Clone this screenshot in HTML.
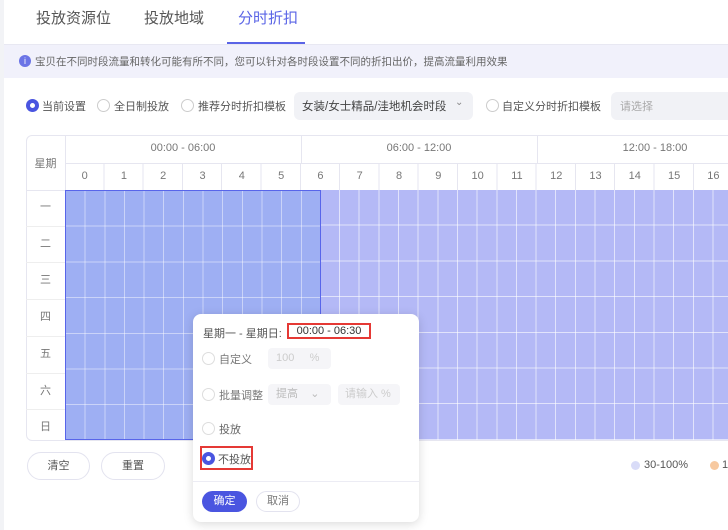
<!DOCTYPE html><html><head><meta charset="utf-8"><style>
*{margin:0;padding:0;box-sizing:border-box}
body{width:728px;height:530px;overflow:hidden;background:#fff;font-family:"Liberation Sans","Noto Sans CJK SC",sans-serif;color:#333;position:relative}
.a{position:absolute;white-space:nowrap}
.strip{left:0;top:0;width:4px;height:530px;background:#f2f3f6}
.tab{top:7px;font-size:15px;color:#555}
.radio{position:absolute;width:13px;height:13px;border:1px solid #ccc;border-radius:50%;background:#fff}
.radio.on{border:4px solid #4a55e0}
.t12{font-size:11px;color:#555}
.hd{font-size:11px;color:#777;text-align:center}
</style></head><body>
<div class="a strip"></div>
<div class="a tab" style="left:36px">投放资源位</div>
<div class="a tab" style="left:144px">投放地域</div>
<div class="a tab" style="left:238px;color:#5a64e6">分时折扣</div>
<div class="a" style="left:4px;top:44px;width:724px;height:1px;background:#e8e8f2"></div>
<div class="a" style="left:227px;top:42px;width:78px;height:2px;background:#5a64e6"></div>
<div class="a" style="left:4px;top:45px;width:724px;height:33px;background:#f1f1fb"></div>
<div class="a" style="left:19px;top:55px;width:12px;height:12px;border-radius:50%;background:#6b74e6;color:#fff;font-size:9px;text-align:center;line-height:12px">i</div>
<div class="a" style="left:35px;top:54px;font-size:10.5px;color:#666">宝贝在不同时段流量和转化可能有所不同，您可以针对各时段设置不同的折扣出价，提高流量利用效果</div>

<div class="radio on" style="left:26px;top:99px"></div><div class="a t12" style="left:42px;top:98px">当前设置</div>
<div class="radio" style="left:97px;top:99px"></div><div class="a t12" style="left:114px;top:98px">全日制投放</div>
<div class="radio" style="left:181px;top:99px"></div><div class="a t12" style="left:198px;top:98px">推荐分时折扣模板</div>
<div class="a" style="left:294px;top:92px;width:179px;height:28px;border-radius:6px;background:#f1f2f6"></div>
<div class="a" style="left:302px;top:98px;font-size:11.5px;color:#444">女装/女士精品/洼地机会时段</div>
<div class="a" style="left:455px;top:97px;font-size:10px;color:#888">⌄</div>
<div class="radio" style="left:486px;top:99px"></div><div class="a t12" style="left:502px;top:98px">自定义分时折扣模板</div>
<div class="a" style="left:611px;top:92px;width:130px;height:28px;border-radius:6px;background:#f1f2f6"></div>
<div class="a" style="left:620px;top:98px;font-size:11px;color:#aaa">请选择</div>

<div class="a" style="left:26px;top:135px;width:720px;height:306px;border:1px solid #e6e6f0;border-radius:6px;overflow:hidden">
<div class="a" style="left:38px;top:0;width:1px;height:306px;background:#e6e6f0"></div>
<div class="a" style="left:38px;top:27px;width:700px;height:1px;background:#e6e6f0"></div>
<div class="a" style="left:0;top:54px;width:38px;height:1px;background:#e6e6f0"></div>
<div class="a" style="left:38px;top:28px;width:700px;height:27px;background:repeating-linear-gradient(90deg,transparent 0,transparent 38.3px,#e6e6f0 38.3px,#e6e6f0 39.3px)"></div>
<div class="a" style="left:274px;top:0;width:1px;height:28px;background:#e6e6f0"></div>
<div class="a" style="left:510px;top:0;width:1px;height:28px;background:#e6e6f0"></div>
</div>
<div class="a hd" style="left:26px;top:155px;width:39px">星期</div>
<div class="a hd" style="left:65px;top:142px;width:236px">00:00 - 06:00</div>
<div class="a hd" style="left:301px;top:142px;width:236px">06:00 - 12:00</div>
<div class="a hd" style="left:537px;top:142px;width:236px">12:00 - 18:00</div>
<div class="a" style="left:65px;top:170px;font-size:11px;color:#777;display:flex">
<span style="width:39.3px;text-align:center">0</span><span style="width:39.3px;text-align:center">1</span><span style="width:39.3px;text-align:center">2</span><span style="width:39.3px;text-align:center">3</span><span style="width:39.3px;text-align:center">4</span><span style="width:39.3px;text-align:center">5</span><span style="width:39.3px;text-align:center">6</span><span style="width:39.3px;text-align:center">7</span><span style="width:39.3px;text-align:center">8</span><span style="width:39.3px;text-align:center">9</span><span style="width:39.3px;text-align:center">10</span><span style="width:39.3px;text-align:center">11</span><span style="width:39.3px;text-align:center">12</span><span style="width:39.3px;text-align:center">13</span><span style="width:39.3px;text-align:center">14</span><span style="width:39.3px;text-align:center">15</span><span style="width:39.3px;text-align:center">16</span>
</div>
<div class="a" style="left:26px;top:190px;width:39px;font-size:11px;color:#777;text-align:center;line-height:35.7px">
<div style="border-bottom:1px solid #eee">一</div><div style="border-bottom:1px solid #eee">二</div><div style="border-bottom:1px solid #eee">三</div><div style="border-bottom:1px solid #eee">四</div><div style="border-bottom:1px solid #eee">五</div><div style="border-bottom:1px solid #eee">六</div><div>日</div></div>
<div class="a" style="left:65px;top:190px;width:663px;height:250px;background:repeating-linear-gradient(90deg,transparent 0,transparent 18.65px,rgba(255,255,255,.6) 18.65px,rgba(255,255,255,.6) 19.65px),repeating-linear-gradient(180deg,transparent 0,transparent 34.7px,rgba(255,255,255,.6) 34.7px,rgba(255,255,255,.6) 35.7px),#b4b9f6"></div>
<div class="a" style="left:65px;top:190px;width:256px;height:250px;border:1px solid #5865ea;background:repeating-linear-gradient(90deg,transparent 0,transparent 18.65px,rgba(255,255,255,.45) 18.65px,rgba(255,255,255,.45) 19.65px),repeating-linear-gradient(180deg,transparent 0,transparent 34.7px,rgba(255,255,255,.45) 34.7px,rgba(255,255,255,.45) 35.7px),#9eaff3"></div>

<div class="a" style="left:27px;top:452px;width:63px;height:28px;border:1px solid #e3e3ef;border-radius:14px;font-size:11px;color:#555;text-align:center;line-height:26px">清空</div>
<div class="a" style="left:101px;top:452px;width:64px;height:28px;border:1px solid #e3e3ef;border-radius:14px;font-size:11px;color:#555;text-align:center;line-height:26px">重置</div>
<div class="a" style="left:631px;top:461px;width:9px;height:9px;border-radius:50%;background:#d9dcf8"></div>
<div class="a" style="left:644px;top:459px;font-size:11px;color:#555">30-100%</div>
<div class="a" style="left:710px;top:461px;width:9px;height:9px;border-radius:50%;background:#f7c9a0"></div>
<div class="a" style="left:722px;top:459px;font-size:11px;color:#555">10</div>

<div class="a" style="left:193px;top:314px;width:226px;height:208px;background:#fff;border-radius:8px;box-shadow:0 2px 10px rgba(0,0,0,.15)">
<div class="a" style="left:10px;top:11px;font-size:11px;color:#555">星期一 - 星期日:</div>
<div class="a" style="left:94px;top:9px;width:84px;height:16px;border:2px solid #e53935;font-size:11px;color:#333;text-align:center;line-height:12px">00:00 - 06:30</div>
<div class="radio" style="left:9px;top:38px;border-color:#ddd"></div><div class="a" style="left:26px;top:37px;font-size:11px;color:#777">自定义</div>
<div class="a" style="left:75px;top:34px;width:63px;height:21px;border-radius:4px;background:#f5f5f8;font-size:11px;color:#ccc;line-height:21px;padding-left:8px">100&nbsp;&nbsp;&nbsp;&nbsp;&nbsp;%</div>
<div class="radio" style="left:9px;top:74px;border-color:#ddd"></div><div class="a" style="left:26px;top:73px;font-size:11px;color:#777">批量调整</div>
<div class="a" style="left:75px;top:70px;width:63px;height:21px;border-radius:4px;background:#f5f5f8;font-size:11px;color:#bbb;line-height:21px;padding-left:8px">提高&nbsp;&nbsp;&nbsp;&nbsp;⌄</div>
<div class="a" style="left:145px;top:70px;width:62px;height:21px;border-radius:4px;background:#f5f5f8;font-size:11px;color:#ccc;line-height:21px;padding-left:7px">请输入 %</div>
<div class="radio" style="left:9px;top:108px;border-color:#ddd"></div><div class="a" style="left:26px;top:107px;font-size:11px;color:#666">投放</div>
<div class="a" style="left:7px;top:132px;width:53px;height:24px;border:2px solid #e53935"></div>
<div class="radio on" style="left:9px;top:138px"></div><div class="a" style="left:25px;top:137px;font-size:11px;color:#555">不投放</div>
<div class="a" style="left:0;top:167px;width:226px;height:1px;background:#ececf4"></div>
<div class="a" style="left:9px;top:177px;width:45px;height:21px;border-radius:11px;background:#4a55e0;color:#fff;font-size:11px;text-align:center;line-height:21px">确定</div>
<div class="a" style="left:63px;top:177px;width:44px;height:21px;border-radius:11px;border:1px solid #e3e3ef;color:#777;font-size:11px;text-align:center;line-height:19px">取消</div>
</div>
</body></html>
